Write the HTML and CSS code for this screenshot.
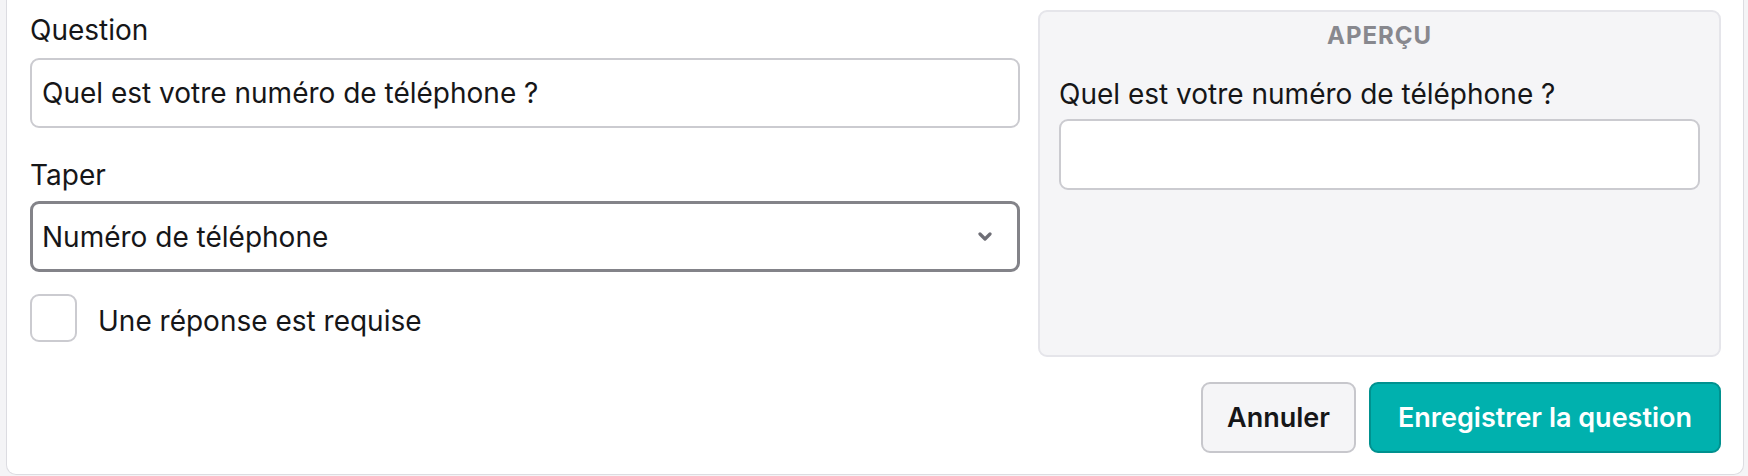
FILE: index.html
```html
<!DOCTYPE html>
<html lang="fr">
<head>
<meta charset="utf-8">
<title>Question</title>
<link rel="stylesheet" href="styles.css">
</head>
<body>
<div class="card">
  <div class="grid">
    <div class="form">
      <div class="field">
        <label class="label">Question</label>
        <div class="input">Quel est votre numéro de téléphone ?</div>
      </div>
      <div class="field">
        <label class="label">Taper</label>
        <div class="input select">
          <span>Numéro de téléphone</span>
          <svg class="chev" width="14" height="9" viewBox="0 0 14 9"><path d="M2 2 L7 7 L12 2" fill="none" stroke="#6e6e76" stroke-width="3.2" stroke-linecap="round" stroke-linejoin="round"/></svg>
        </div>
      </div>
      <div class="check-row">
        <span class="checkbox"></span>
        <span class="check-label">Une réponse est requise</span>
      </div>
    </div>
    <div class="preview">
      <div class="preview-title">APERÇU</div>
      <div class="preview-q">Quel est votre numéro de téléphone ?</div>
      <div class="input preview-input"></div>
    </div>
  </div>
  <div class="actions">
    <button class="btn btn-cancel">Annuler</button>
    <button class="btn btn-save">Enregistrer la question</button>
  </div>
</div>
</body>
</html>
```

FILE: styles.css
```css
* { box-sizing: border-box; }
html, body { margin: 0; padding: 0; }
body {
  background: #f4f4f6;
  font-family: Inter, "Noto Sans", sans-serif;
  color: #161618;
  padding: 0 4px 1px 6px;
}
.card {
  background: #fff;
  border: 1px solid #dcdce1;
  border-top: none;
  border-radius: 0 0 10px 10px;
  padding: 10px 22px 21px 23px;
  height: 475px;
}
.grid {
  display: grid;
  grid-template-columns: 1fr 683px;
  column-gap: 18px;
}
.form {
  padding-top: 2px;
  display: flex;
  flex-direction: column;
}
.field { display: flex; flex-direction: column; }
.field + .field { margin-top: 29px; }
.label {
  font-size: 28px;
  line-height: 36px;
  margin-bottom: 10px;
}
.field + .field .label { margin-bottom: 8px; }
.input {
  height: 70px;
  border: 2px solid #cbcbd0;
  border-radius: 9px;
  background: #fff;
  font-size: 28px;
  line-height: 36px;
  padding: 15px 10px;
}
.select {
  height: 71px;
  border: 3px solid #838389;
  padding: 15px 9px;
  display: flex;
  align-items: center;
  justify-content: space-between;
}
.chev { margin-right: 16px; }
.check-row {
  margin-top: 22px;
  display: flex;
  align-items: center;
  gap: 21px;
}
.checkbox {
  width: 47px;
  height: 48px;
  border: 2px solid #cbcbd0;
  border-radius: 9px;
  background: #fff;
}
.check-label { font-size: 28px; line-height: 36px; padding-top: 5px; }
.preview {
  height: 347px;
  background: #f5f5f7;
  border: 2px solid #e5e5ea;
  border-radius: 9px;
  padding: 6px 19px;
}
.preview-title {
  text-align: center;
  font-size: 24px;
  font-weight: 700;
  letter-spacing: 0.04em;
  color: #88888e;
  line-height: 36px;
  margin-bottom: 22px;
}
.preview-q {
  font-size: 28px;
  line-height: 36px;
  margin-bottom: 7px;
}
.preview-input { height: 71px; }
.actions {
  margin-top: 25px;
  display: flex;
  justify-content: flex-end;
  gap: 13px;
}
.btn {
  height: 71px;
  font-family: Inter, "Noto Sans", sans-serif;
  font-size: 27px;
  font-weight: 600;
  border-radius: 9px;
  padding: 0 18px;
  cursor: pointer;
}
.btn-cancel {
  background: #f5f5f7;
  border: 2px solid #c7c7cc;
  color: #161618;
  width: 155px;
}
.btn-save {
  background: #00b1ae;
  border: 2px solid #00918f;
  color: #fff;
  width: 352px;
}
```
